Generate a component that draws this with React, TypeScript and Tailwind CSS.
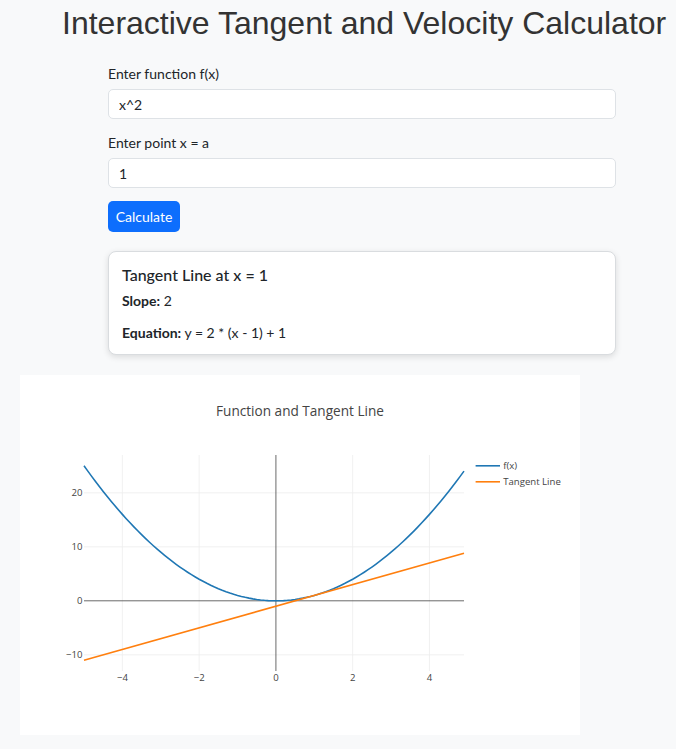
import React from "react";

const L = 80, R = 555, T = 100, B = 370;
const XMIN = -5, XMAX = 4.9, YMIN = -13, YMAX = 27;
const sx = (x: number) => L + ((x - XMIN) / (XMAX - XMIN)) * (R - L);
const sy = (y: number) => B - ((y - YMIN) / (YMAX - YMIN)) * (B - T);

function Plot() {
  const xs: number[] = [];
  for (let i = 0; i < 100; i++) xs.push(-5 + i * 0.1);
  const fPath = xs.map((x, i) => `${i === 0 ? "M" : "L"}${sx(x).toFixed(2)},${sy(x * x).toFixed(2)}`).join("");
  const tPath = `M${sx(-5)},${sy(2 * (-5 - 1) + 1)}L${sx(4.9)},${sy(2 * (4.9 - 1) + 1)}`;
  const font = "'Open Sans', verdana, arial, sans-serif";
  return (
    <svg width={560} height={360} viewBox="0 0 700 450" className="block">
      <rect x={0} y={0} width={700} height={450} fill="#fff" />
      {[-4, -2, 2, 4].map((v) => (
        <line key={"gx" + v} x1={sx(v)} x2={sx(v)} y1={T} y2={B} stroke="#eee" strokeWidth={1} />
      ))}
      {[-10, 10, 20].map((v) => (
        <line key={"gy" + v} x1={L} x2={R} y1={sy(v)} y2={sy(v)} stroke="#eee" strokeWidth={1} />
      ))}
      <line x1={sx(0)} x2={sx(0)} y1={T} y2={B} stroke="#444" strokeWidth={1} />
      <line x1={L} x2={R} y1={sy(0)} y2={sy(0)} stroke="#444" strokeWidth={1} />
      <path d={fPath} fill="none" stroke="#1f77b4" strokeWidth={2} />
      <path d={tPath} fill="none" stroke="#ff7f0e" strokeWidth={2} />
      {[-4, -2, 0, 2, 4].map((v) => (
        <text key={"tx" + v} x={sx(v)} y={383} textAnchor="middle" fontSize={12} fill="#444" fontFamily={font}>
          {v < 0 ? "\u2212" + Math.abs(v) : String(v)}
        </text>
      ))}
      {[-10, 0, 10, 20].map((v) => (
        <text key={"ty" + v} x={78} y={sy(v) + 4.2} textAnchor="end" fontSize={12} fill="#444" fontFamily={font}>
          {v < 0 ? "\u2212" + Math.abs(v) : String(v)}
        </text>
      ))}
      <text x={350} y={51} textAnchor="middle" fontSize={17} fill="#444" fontFamily={font}>
        Function and Tangent Line
      </text>
      <line x1={569.5} x2={600} y1={113.5} y2={113.5} stroke="#1f77b4" strokeWidth={2} />
      <text x={604} y={117.7} fontSize={12} fill="#444" fontFamily={font}>f(x)</text>
      <line x1={569.5} x2={600} y1={133.5} y2={133.5} stroke="#ff7f0e" strokeWidth={2} />
      <text x={604} y={137.7} fontSize={12} fill="#444" fontFamily={font}>Tangent Line</text>
    </svg>
  );
}

export default function App() {
  return (
    <div className="min-h-[749px] bg-[#f8f9fa] pb-[14px]">
      <h1 className="pl-[62px] pt-[4px] text-[32px] leading-[38px] text-[#333] whitespace-nowrap font-['Liberation_Sans',Arial,sans-serif]">
        Interactive Tangent and Velocity Calculator
      </h1>
      <div className="ml-[108px] w-[508px] mt-[21px] font-['Lato',sans-serif] text-[14px] text-[#212529]">
        <label className="block leading-[21px] mb-[5px]">Enter function f(x)</label>
        <input
          readOnly
          value="x^2"
          className="block w-full h-[30px] border border-[#dee2e6] rounded-[5px] bg-white px-[10px] text-[14px] text-[#212529] outline-none"
        />
        <label className="block leading-[21px] mb-[5px] mt-[13px]">Enter point x = a</label>
        <input
          readOnly
          value="1"
          className="block w-full h-[30px] border border-[#dee2e6] rounded-[5px] bg-white px-[10px] text-[14px] text-[#212529] outline-none"
        />
        <button className="mt-[13px] w-[72px] h-[31px] rounded-[5px] bg-[#0d6efd] text-white text-[14px] flex items-center justify-center">
          Calculate
        </button>
        <div className="mt-[19px] bg-white border border-[#d9dcdf] rounded-[8px] shadow-[0_2px_6px_rgba(0,0,0,0.12)] px-[13px] pt-[13px] pb-[11px]">
          <div className="text-[16px] leading-[19px] font-medium mb-[6px]">Tangent Line at x = 1</div>
          <p className="leading-[21px]">
            <span className="font-bold">Slope:</span> 2
          </p>
          <p className="leading-[21px] mt-[11px]">
            <span className="font-bold">Equation:</span> y = 2 * (x - 1) + 1
          </p>
        </div>
      </div>
      <div className="ml-[20px] mt-[20px] w-[560px] h-[360px] bg-white">
        <Plot />
      </div>
    </div>
  );
}
